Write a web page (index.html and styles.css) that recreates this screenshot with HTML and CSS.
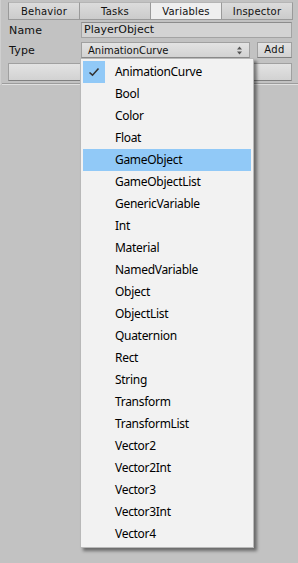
FILE: index.html
```html
<!DOCTYPE html>
<html lang="en">
<head>
    <meta charset="UTF-8">
    <meta name="viewport" content="width=device-width, initial-scale=1.0">
    <title>Variables</title>
    <link rel="stylesheet" href="styles.css">
</head>
<body>
    <div id="panel">
        <!-- Tab toolbar -->
        <div class="tabs">
            <div class="tab">Behavior</div>
            <div class="tab">Tasks</div>
            <div class="tab selected">Variables</div>
            <div class="tab">Inspector</div>
        </div>

        <div class="row">
            <div class="label">Name</div>
            <div class="field">PlayerObject</div>
        </div>

        <div class="row">
            <div class="label">Type</div>
            <div class="popup">
                <span>AnimationCurve</span>
                <svg class="arrows" width="7" height="9" viewBox="0 0 7 9">
                    <path d="M3.5 0.5 L6 3.5 H1 Z M3.5 8.5 L6 5.5 H1 Z" fill="#555"/>
                </svg>
            </div>
            <div class="button add">Add</div>
        </div>

        <div class="button wide"></div>
        <div class="separator"></div>
    </div>

    <!-- Type dropdown -->
    <div class="menu">
        <div class="item checked">
            <span class="check">
                <svg width="12" height="10" viewBox="0 0 12 10">
                    <path d="M1.5 5.5 L4.5 8.2 L10.5 1.5" fill="none" stroke="#333" stroke-width="1.6"/>
                </svg>
            </span>
            AnimationCurve
        </div>
        <div class="item">Bool</div>
        <div class="item">Color</div>
        <div class="item">Float</div>
        <div class="item hover">GameObject</div>
        <div class="item">GameObjectList</div>
        <div class="item">GenericVariable</div>
        <div class="item">Int</div>
        <div class="item">Material</div>
        <div class="item">NamedVariable</div>
        <div class="item">Object</div>
        <div class="item">ObjectList</div>
        <div class="item">Quaternion</div>
        <div class="item">Rect</div>
        <div class="item">String</div>
        <div class="item">Transform</div>
        <div class="item">TransformList</div>
        <div class="item">Vector2</div>
        <div class="item">Vector2Int</div>
        <div class="item">Vector3</div>
        <div class="item">Vector3Int</div>
        <div class="item">Vector4</div>
    </div>
</body>
</html>
```

FILE: styles.css
```css
body {
    margin: 0;
    padding: 0;
    width: 298px;
    height: 563px;
    overflow: hidden;
    background-color: #c2c2c2;
    font-family: "DejaVu Sans", sans-serif;
    font-size: 11px;
    color: #111;
    position: relative;
}

#panel {
    padding: 2px 6px 0 7px;
    border-left: 1px solid #cfcfcf;
}

.tabs {
    display: flex;
    height: 18px;
    margin-right: -1px;
}

.tab {
    flex: 1;
    display: flex;
    align-items: center;
    justify-content: center;
    font-size: 10px;
    letter-spacing: 0.2px;
    background: linear-gradient(#dcdcdc, #cbcbcb);
    border: 1px solid #9a9a9a;
    border-right: none;
    border-top-color: #b5b5b5;
}

.tab:last-child {
    border-right: 1px solid #9a9a9a;
}

.tab.selected {
    background: #efefef;
}

.row {
    display: flex;
    align-items: center;
    height: 16px;
    margin-top: 2px;
}

.row + .row {
    margin-top: 4px;
}

.label {
    width: 72px;
    padding-left: 1px;
    letter-spacing: 0.2px;
}

.field {
    flex: 1;
    height: 14px;
    line-height: 14px;
    padding-left: 2px;
    background: #d3d3d3;
    border: 1px solid #a3a3a3;
    border-top-color: #8c8c8c;
}

.popup {
    width: 155px;
    height: 14px;
    display: flex;
    align-items: center;
    justify-content: space-between;
    padding: 0 6px 0 6px;
    font-size: 10px;
    background: linear-gradient(#e3e3e3, #d2d2d2);
    border: 1px solid #a0a0a0;
    border-bottom-color: #8a8a8a;
}

.button {
    background: linear-gradient(#e3e3e3, #d2d2d2);
    border: 1px solid #a0a0a0;
    border-bottom-color: #808080;
}

.add {
    margin-left: 7px;
    flex: 1;
    height: 14px;
    line-height: 14px;
    text-align: center;
    font-size: 10px;
    letter-spacing: 0.3px;
}

.wide {
    height: 16px;
    margin-top: 5px;
}

.separator {
    margin: 2px -6px 0 -6px;
    height: 1px;
    border-top: 1px solid #9c9c9c;
    background: #e0e0e0;
}

.menu {
    position: absolute;
    left: 80px;
    top: 58px;
    width: 172px;
    padding: 2px 0 2px 0;
    background: #f2f2f2;
    border: 1px solid #b9b9b9;
    box-shadow: 3px 3px 3px rgba(0, 0, 0, 0.45);
    font-family: "Noto Sans", sans-serif;
    font-size: 12px;
    color: #000;
}

.item {
    position: relative;
    height: 22px;
    line-height: 22px;
    margin: 0 2px;
    padding-left: 32px;
    letter-spacing: -0.3px;
}

.item.hover {
    background: #91c9f7;
}

.check {
    position: absolute;
    left: 0;
    top: 0;
    width: 22px;
    height: 22px;
    background: #91c9f7;
    display: flex;
    align-items: center;
    justify-content: center;
}
```
